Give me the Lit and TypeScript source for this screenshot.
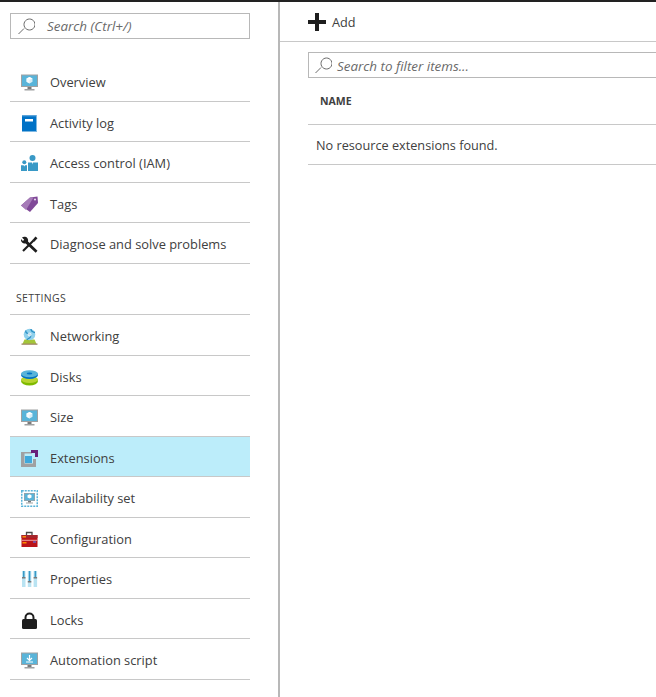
import { LitElement, html, css, svg } from "lit";
import { customElement } from "lit/decorators.js";

const monitor = (inner: unknown) => svg`
  <g transform="translate(0 .5)">
  <rect x="0" y="0" width="17" height="12.5" fill="#a0a1a2"/>
  <rect x="1" y="1" width="15" height="10.5" fill="#59b4d9"/>
  <rect x="6.5" y="12.5" width="4" height="2" fill="#7a7a7a"/>
  <rect x="3.5" y="14.5" width="10" height="1.5" fill="#a0a1a2"/>
  ${inner}</g>`;
const cube = svg`
  <path d="M8.5 2.500l3 1.400v3.400l-3 1.800-3-1.800V3.900z" fill="#d8eef7"/>
  <path d="M5.500 3.900l3 1.400 3-1.400-3-1.400z" fill="#fff"/>
  <path d="M8.500 5.300v3.800l-3-1.800V3.900z" fill="#fff" opacity=".75"/>`;

const icons: Record<string, unknown> = {
  monitor: monitor(cube),
  book: svg`
    <rect x="1" y="0.500" width="15" height="16" fill="#0072c6"/>
    <rect x="15" y="0.500" width="1" height="16" fill="#7fb9e3"/>
    <rect x="1" y="0.500" width="14" height="1" fill="#3a8fd2"/>
    <rect x="4" y="4" width="8" height="2.500" fill="#fff"/>`,
  users: svg`
    <circle cx="11.500" cy="3" r="3" fill="#3999c6"/>
    <path d="M7 7.500h4l.5 2 .5-2h5V16H7z" fill="#3999c6"/>
    <circle cx="3.300" cy="7.200" r="2" fill="#3999c6"/>
    <path d="M0 10.200h2.600l.7 1.400.7-1.400H6V16H0z" fill="#3999c6"/>`,
  tag: svg`
    <path d="M0 9.500L9 1.500l7.500-1 .5 6.500-8 9z" fill="#804998"/>
    <path d="M0 9.500L9 1.500l3.500 0L5 14z" fill="#a67bb8"/>
    <circle cx="14" cy="3.500" r="1.100" fill="#e6d9ec"/>`,
  tools: svg`
    <path d="M2 15L12.500 4.500" stroke="#1e1e1e" stroke-width="2.200" fill="none"/>
    <path d="M11.500 4l3-3.500 2 1.800-3.200 3.400z" fill="#1e1e1e"/>
    <path d="M4.300 .8a3.600 3.600 0 0 0-3.300.7l2.200 2.200-1.300 1.400L.1 3a3.600 3.600 0 0 0 4.600 4.400l10 9.300 1.800-2L7 5.400A3.700 3.700 0 0 0 4.300.8z" fill="#1e1e1e"/>`,
  network: svg`
    <path d="M1.500 16l2-4.500h10l2 4.500z" fill="#a4c639"/>
    <rect x="0.500" y="15.500" width="16" height="1.300" fill="#a08a64"/>
    <circle cx="8.500" cy="6.500" r="5.800" fill="#8fd0ec"/>
    <path d="M5 2.500c-1 2 1 3 3 3.500s2 2.500 1 3.500-3 1.500-3 2.500M10 1c0 2 1.500 3 4 3.500" stroke="#2a8fc4" stroke-width="1.300" fill="none"/>
    <circle cx="8.500" cy="6.500" r="2" fill="#fff" opacity=".7"/>`,
  disks: svg`
    <ellipse cx="8.500" cy="12" rx="8.500" ry="4.500" fill="#7fba00"/>
    <ellipse cx="8.500" cy="10.500" rx="8.500" ry="3.500" fill="#b8d432"/>
    <ellipse cx="8.500" cy="6" rx="8.500" ry="4" fill="#0072c6"/>
    <ellipse cx="8.500" cy="4.700" rx="8.500" ry="3.500" fill="#59b4d9"/>
    <ellipse cx="8.500" cy="4.500" rx="2.800" ry="1" fill="#0072c6"/>`,
  extensions: svg`
    <path fill-rule="evenodd" d="M0 2h11v1.500H3.500v10H12V9h3v8H0z" fill="#a0a1a2"/>
    <rect x="4" y="6" width="7" height="7" fill="#3fa9dc"/>
    <path d="M10 0h7v7h-3V3h-4z" fill="#68217a"/>`,
  availability: svg`
    <rect x="0.750" y="0.750" width="15.500" height="15.500" fill="none" stroke="#59b4d9" stroke-width="1.500" stroke-dasharray="2 1"/>
    <rect x="3" y="3" width="11" height="8" fill="#a0a1a2"/>
    <rect x="3.700" y="3.700" width="9.600" height="6.600" fill="#59b4d9"/>
    <path d="M8.500 4.300l2 1v2.300l-2 1-2-1V5.300z" fill="#fff"/>
    <rect x="7" y="11" width="3" height="1.500" fill="#7a7a7a"/>
    <rect x="5" y="12.500" width="7" height="1" fill="#a0a1a2"/>`,
  config: svg`
    <path d="M5.500 4V1.500h5.500V4" fill="none" stroke="#4a4a4a" stroke-width="1.300"/>
    <rect x="0.500" y="4" width="16" height="12" fill="#ba141a"/>
    <rect x="0.500" y="4" width="16" height="3" fill="#a4262c"/>
    <rect x="0.500" y="8.800" width="16" height="1" fill="#f0a0a0"/>
    <rect x="1.500" y="5" width="3.500" height="1.500" fill="#ff8c00"/>
    <rect x="1.500" y="11" width="4" height="1.500" fill="#ff8c00"/>
    <rect x="12" y="10" width="3" height="2" fill="#804998"/>`,
  props: svg`
    <rect x="1" y="0" width="3.500" height="16" fill="#b9e3f2"/>
    <rect x="6.800" y="0" width="3.500" height="16" fill="#b9e3f2"/>
    <rect x="12.600" y="0" width="3.500" height="16" fill="#b9e3f2"/>
    <rect x="2" y="0" width="1.500" height="6" fill="#3999c6"/>
    <rect x="7.800" y="0" width="1.500" height="10" fill="#3999c6"/>
    <rect x="13.600" y="0" width="1.500" height="6" fill="#3999c6"/>
    <rect x="1" y="6" width="3.500" height="1.500" fill="#7a7a7a"/>
    <rect x="6.800" y="10" width="3.500" height="1.500" fill="#7a7a7a"/>
    <rect x="12.600" y="6" width="3.500" height="1.500" fill="#7a7a7a"/>`,
  lock: svg`
    <path d="M4.500 8V5.500a4 4 0 0 1 8 0V8" fill="none" stroke="#1e1e1e" stroke-width="2"/>
    <rect x="1" y="7" width="15" height="10" rx="1.500" fill="#1e1e1e"/>`,
  script: monitor(svg`
    <path d="M8.500 2.500v5M6 5.500l2.500 2.500L11 5.500" fill="none" stroke="#fff" stroke-width="1.200"/>
    <rect x="5" y="9" width="7" height="1" fill="#fff"/>`),
};

const top = [
  ["monitor", "Overview"],
  ["book", "Activity log"],
  ["users", "Access control (IAM)"],
  ["tag", "Tags"],
  ["tools", "Diagnose and solve problems"],
];
const settings = [
  ["network", "Networking"],
  ["disks", "Disks"],
  ["monitor", "Size"],
  ["extensions", "Extensions"],
  ["availability", "Availability set"],
  ["config", "Configuration"],
  ["props", "Properties"],
  ["lock", "Locks"],
  ["script", "Automation script"],
];

const glass = svg`<path d="M6 10.500L.5 16M11.500 1a5.500 5.500 0 1 1-.01 0z" fill="none" stroke="currentColor" stroke-width="1"/>`;

@customElement("app-root")
export class AppRoot extends LitElement {
  static styles = css`
    :host {
      display: block;
      width: 656px;
      height: 697px;
      overflow: hidden;
      background: #fff;
      font-family: "Open Sans", "Liberation Sans", sans-serif;
      font-size: 12.7px;
      color: #404040;
    }
    .shell {
      height: 695px;
      border-top: 2px solid #222;
      display: flex;
    }
    .side {
      width: 240px;
      flex: none;
      padding: 11px 28px 0 10px;
      border-right: 2px solid #b8b8b8;
    }
    .search {
      box-sizing: border-box;
      height: 26px;
      border: 1px solid #b8b8b8;
      display: flex;
      align-items: center;
      gap: 12px;
      padding-left: 7px;
      color: #6a6a6a;
      font-style: italic;
      font-size: 13.4px;
    }
    .search svg {
      width: 17px;
      height: 17px;
      flex: none;
    }
    .list {
      margin-top: 22px;
    }
    .row {
      box-sizing: border-box;
      height: 40.5px;
      display: flex;
      align-items: center;
      gap: 11px;
      padding: 3px 0 0 11px;
      font-size: 12.85px;
      border-bottom: 1px solid #c8c8c8;
    }
    .row.sel {
      background: #bcedfa;
    }
    .row svg {
      width: 18px;
      height: 18px;
      flex: none;
      overflow: visible;
    }
    .head {
      box-sizing: border-box;
      height: 51.5px;
      padding: 26px 0 0 6px;
      font-size: 10.5px;
      letter-spacing: 0.35px;
      line-height: 16px;
      border-bottom: 1px solid #c8c8c8;
    }
    .main {
      flex: 1;
      min-width: 0;
    }
    .bar {
      box-sizing: border-box;
      height: 40px;
      border-bottom: 1px solid #c8c8c8;
      display: flex;
      align-items: center;
      gap: 6px;
      padding: 1px 0 0 28px;
    }
    .bar svg {
      width: 18px;
      height: 18px;
      flex: none;
    }
    .body {
      padding: 10px 0 0 28px;
    }
    .filter {
      box-sizing: border-box;
      height: 26px;
      width: 400px;
      border: 1px solid #b8b8b8;
      display: flex;
      align-items: center;
      gap: 5px;
      padding: 1px 0 0 6px;
      color: #6a6a6a;
      font-style: italic;
      font-size: 13.4px;
    }
    .filter svg {
      width: 17px;
      height: 17px;
      flex: none;
    }
    .th {
      box-sizing: border-box;
      height: 47px;
      padding: 15px 0 0 12px;
      font-size: 10.5px;
      font-weight: 700;
      line-height: 16px;
      border-bottom: 1px solid #c8c8c8;
    }
    .td {
      box-sizing: border-box;
      height: 40px;
      display: flex;
      align-items: center;
      padding: 1px 0 0 8px;
      border-bottom: 1px solid #c8c8c8;
    }
  `;

  private row(item: string[]) {
    const [icon, label] = item;
    return html`<div class="row ${label === "Extensions" ? "sel" : ""}">
      <svg viewBox="0 -1 18 18">${icons[icon]}</svg><span>${label}</span>
    </div>`;
  }

  render() {
    return html`<div class="shell">
      <div class="side">
        <div class="search"><svg viewBox="0 0 17 17">${glass}</svg><span>Search (Ctrl+/)</span></div>
        <div class="list">${top.map((i) => this.row(i))}</div>
        <div class="head">SETTINGS</div>
        <div>${settings.map((i) => this.row(i))}</div>
      </div>
      <div class="main">
        <div class="bar">
          <svg viewBox="0 0 18 18"><path d="M7 0h4v7h7v4h-7v7H7v-7H0V7h7z" fill="#1e1e1e"/></svg>
          <span>Add</span>
        </div>
        <div class="body">
          <div class="filter"><svg viewBox="0 0 17 17">${glass}</svg><span>Search to filter items...</span></div>
          <div class="th">NAME</div>
          <div class="td">No resource extensions found.</div>
        </div>
      </div>
    </div>`;
  }
}
